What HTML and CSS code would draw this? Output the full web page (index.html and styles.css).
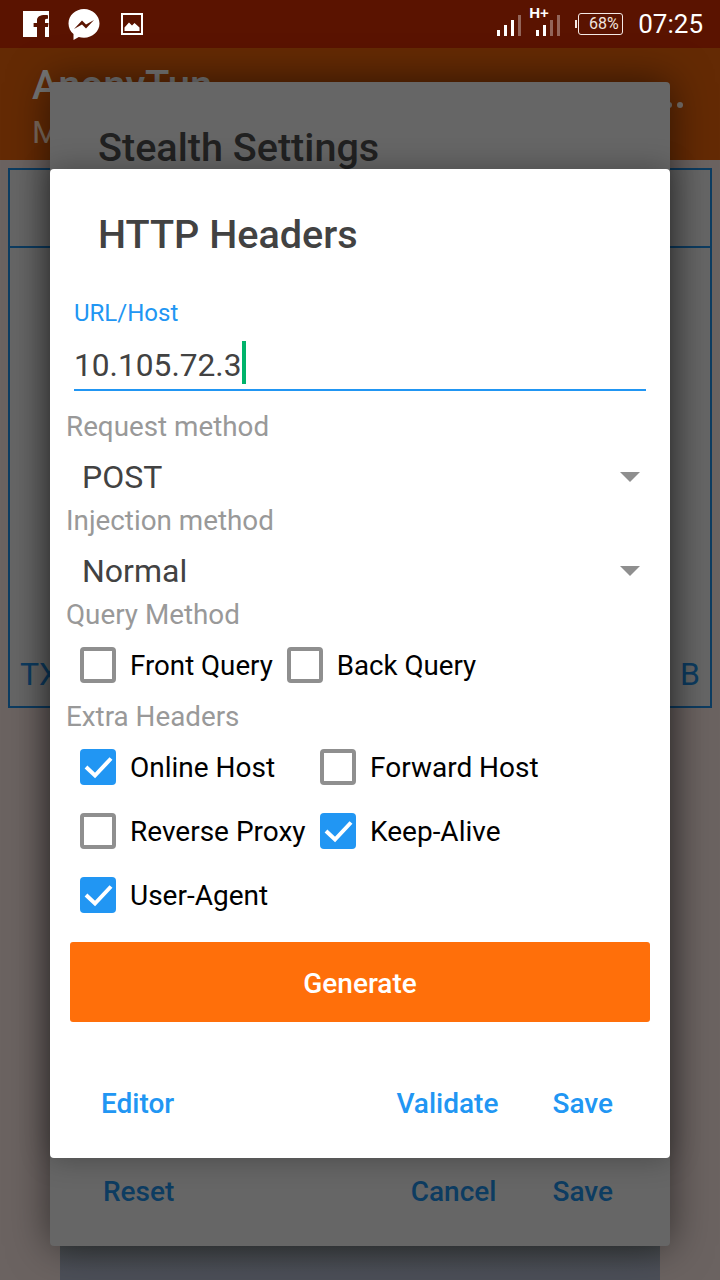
FILE: index.html
```html
<!DOCTYPE html>
<html lang="en">
<head>
    <meta charset="UTF-8">
    <meta name="viewport" content="width=device-width, initial-scale=1.0">
    <title>HTTP Headers</title>
    <link rel="stylesheet" href="styles.css">
</head>
<body>
    <div class="statusbar">
        <div class="status-icons">
            <svg class="ic-fb" width="26" height="26" viewBox="0 0 26 26"><path fill="#fff" d="M0 0h26v26H22V16h3l.5-4H22V9.600c0-1.200.4-1.900 2-1.900h1V4.200C24.500 4.100 23.300 4 22 4c-5 0-8 1.800-8 5.100V12h-3.400v4H14v10H0z"/></svg>
            <svg class="ic-ms" width="32" height="32" viewBox="0 0 32 32"><path fill="#fff" d="M16 0C7.500 0 .5 6.400.5 14.500c0 4.300 1.900 8 5 10.600V31l5.300-3c1.600.4 3.400.7 5.200.7 8.500 0 15.500-6.200 15.500-14.200S24.500 0 16 0z"/><path fill="#5a1300" d="M6 20l8-8.500 4 4 8-4.500-8 8.500-4-4z"/></svg>
            <svg class="ic-img" width="22" height="22" viewBox="0 0 22 22"><path fill="#fff" fill-rule="evenodd" d="M0 0h22v22H0zM2 2v18h18V2z"/><path fill="#fff" d="M3.500 18v-3.500L8 9.500l3 3 2.500-2.500 5 4.500V18z"/></svg>
        </div>
        <div class="status-right">
            <svg class="ic-sig" width="24" height="21" viewBox="0 0 24 21"><path fill="#fff" d="M0 15h3v6H0zM7 10h3v11H7zM14 5h3v16h-3z"/><path fill="#fff" opacity=".35" d="M21 0h3v21h-3z"/></svg>
            <div class="hplus-wrap">
                <span class="hplus">H+</span>
                <svg class="ic-sig" width="24" height="21" viewBox="0 0 24 21"><path fill="#fff" d="M0 15h3v6H0zM7 10h3v11H7z"/><path fill="#fff" opacity=".35" d="M14 5h3v16h-3zM21 0h3v21h-3z"/></svg>
            </div>
            <div class="battery"><span class="battery-nub"></span>68%</div>
            <span class="clock">07:25</span>
        </div>
    </div>

    <div class="appbar"></div>
    <span class="app-title">AnonyTun</span>
    <span class="app-sub">M</span>
    <span class="app-dots"><i></i><i></i></span>

    <div class="panel">
        <div class="panel-head"></div>
        <div class="panel-body"><span>TX</span><span>B</span></div>
    </div>
    <div class="under"></div>

    <div class="dialog-back">
        <h2>Stealth Settings</h2>
        <div class="back-actions">
            <span>Reset</span>
            <span class="spacer"></span>
            <span>Cancel</span>
            <span>Save</span>
        </div>
    </div>

    <div class="dialog">
        <h1>HTTP Headers</h1>

        <div class="field">
            <label>URL/Host</label>
            <div class="input"><span>10.105.72.3</span><i class="cursor"></i></div>
        </div>

        <div class="group-label">Request method</div>
        <div class="select"><span>POST</span><i class="caret"></i></div>
        <div class="group-label">Injection method</div>
        <div class="select"><span>Normal</span><i class="caret"></i></div>

        <div class="group-label">Query Method</div>
        <div class="query-row">
            <div class="check"><i class="box"></i>Front Query</div>
            <div class="check"><i class="box"></i>Back Query</div>
        </div>

        <div class="group-label">Extra Headers</div>
        <div class="extra-grid">
            <div class="check"><i class="box on"><svg width="36" height="36" viewBox="0 0 36 36"><path d="M6 18l9 8.500L31 9.500" fill="none" stroke="#fff" stroke-width="4"/></svg></i>Online Host</div>
            <div class="check"><i class="box"></i>Forward Host</div>
            <div class="check"><i class="box"></i>Reverse Proxy</div>
            <div class="check"><i class="box on"><svg width="36" height="36" viewBox="0 0 36 36"><path d="M6 18l9 8.500L31 9.500" fill="none" stroke="#fff" stroke-width="4"/></svg></i>Keep-Alive</div>
            <div class="check"><i class="box on"><svg width="36" height="36" viewBox="0 0 36 36"><path d="M6 18l9 8.500L31 9.500" fill="none" stroke="#fff" stroke-width="4"/></svg></i>User-Agent</div>
        </div>

        <button class="generate">Generate</button>

        <div class="actions">
            <span>Editor</span>
            <span class="spacer"></span>
            <span>Validate</span>
            <span>Save</span>
        </div>
    </div>
</body>
</html>
```

FILE: styles.css
```css
* { box-sizing: border-box; }
html, body { margin: 0; padding: 0; }
body { position: relative; width: 720px; height: 1280px; overflow: hidden; background: #6b6361; font-family: Roboto, sans-serif; }

.statusbar { height: 48px; background: #5a1300; display: flex; justify-content: space-between; padding: 0 17px 0 23px; color: #fff; }
.status-icons { display: flex; align-items: flex-start; }
.ic-fb { margin-top: 11px; }
.ic-ms { margin: 9px 0 0 19px; }
.ic-img { margin: 13px 0 0 21px; }
.status-right { display: flex; align-items: flex-start; height: 48px; }
.ic-sig { display: block; margin-top: 15px; }
.hplus-wrap { position: relative; width: 24px; margin-left: 15px; height: 48px; }
.hplus { position: absolute; top: 5px; left: -7px; font-family: "Liberation Sans", sans-serif; font-size: 15px; font-weight: 700; line-height: 16px; color: #fff; }
.battery { position: relative; width: 45px; height: 22px; margin: 13px 15px 0 18px; border: 1px solid #f5e9e5; border-radius: 3px; font-size: 16px; line-height: 20px; text-align: center; padding-left: 6px; color: #f0e4df; }
.battery-nub { position: absolute; left: -4px; top: 6px; width: 2px; height: 8px; background: #f5e9e5; }
.clock { font-size: 26px; line-height: 48px; color: #fff; }

.appbar { height: 112px; background: #642a04; }
.app-title { position: absolute; left: 32px; top: 62px; font-size: 40px; font-weight: 500; color: #777; }
.app-sub { position: absolute; left: 32px; top: 113px; font-size: 32px; color: #7c6a5c; }
.app-dots { position: absolute; left: 666px; top: 102px; display: flex; gap: 5px; }
.app-dots i { width: 6px; height: 6px; border-radius: 50%; background: #77706b; }

.panel { position: absolute; left: 8px; top: 168px; width: 704px; height: 540px; border: 2px solid #0d3c61; background: #666; }
.panel-head { height: 78px; border-bottom: 2px solid #0d3c61; }
.panel-body { display: flex; justify-content: space-between; padding: 404px 10px 0 10px; font-size: 32px; line-height: 44px; color: #0d3c61; }
.under { position: absolute; left: 60px; top: 1246px; width: 600px; height: 34px; background: linear-gradient(#44484b, #4c4f58 25px); }

.dialog-back { position: absolute; left: 50px; top: 82px; width: 620px; height: 1164px; background: #666; border-radius: 4px; box-shadow: 0 0 40px rgba(0,0,0,.55); }
.dialog-back h2 { margin: 0; padding: 41px 0 0 48px; font-size: 39.600px; line-height: 50px; font-weight: 500; color: #212121; }
.back-actions { position: absolute; left: 53px; right: 57px; top: 1091px; display: flex; gap: 56px; font-size: 28px; line-height: 38px; font-weight: 500; color: #0d3c61; }
.spacer { flex: 1; }

.dialog { position: absolute; left: 50px; top: 169px; width: 620px; height: 989px; background: #fff; border-radius: 4px; box-shadow: 0 0 30px rgba(0,0,0,.3); padding: 41px 20px 0 16px; }
.dialog h1 { margin: 0 0 0 32px; font-size: 39.600px; line-height: 50px; font-weight: 500; color: #424242; }

.field { margin: 38px 4px 0 8px; }
.field label { display: block; font-size: 24px; line-height: 30px; color: #2196f3; }
.input { display: flex; align-items: flex-end; height: 57px; margin-top: 6px; border-bottom: 2px solid #2196f3; font-size: 31.700px; line-height: 42px; color: #424242; padding-bottom: 5px; }
.input span { margin-bottom: -3px; }
.cursor { width: 4px; height: 43px; background: #00b36b; }

.group-label { font-size: 27.800px; line-height: 36px; color: #999; }
.field + .group-label { margin-top: 18px; }
.select { position: relative; height: 58px; padding: 12px 0 0 16px; font-size: 32px; line-height: 40px; color: #424242; }
.caret { position: absolute; right: 10px; top: 27px; border: 10px solid transparent; border-top: 10px solid #8f8f8f; border-bottom: 0; }

.check { display: flex; align-items: center; gap: 14px; font-size: 28px; color: #000; white-space: nowrap; height: 64px; }
.box { flex: none; width: 36px; height: 36px; border: 4px solid #8f8f8f; border-radius: 4px; background: #fff; }
.box.on { border: 0; background: #2196f3; }
.box svg { display: block; }
.query-row { display: flex; gap: 14px; padding-left: 14px; margin: -1px 0 1px; }
.query-row .check { height: 66px; font-size: 27.700px; }
.extra-grid { display: grid; grid-template-columns: 240px 1fr; padding-left: 14px; }

.generate { display: block; width: 580px; height: 80px; margin: 15px 0 0 4px; padding: 2px 0 0; border: 0; border-radius: 3px; background: #ff6f0a; color: #fff; font-family: Roboto, sans-serif; font-size: 28px; font-weight: 500; }

.actions { display: flex; gap: 55px; margin: 63px 37px 0 35px; font-size: 28px; line-height: 38px; font-weight: 500; color: #2196f3; }
.actions span:nth-child(3) { margin-right: -1px; }
```
